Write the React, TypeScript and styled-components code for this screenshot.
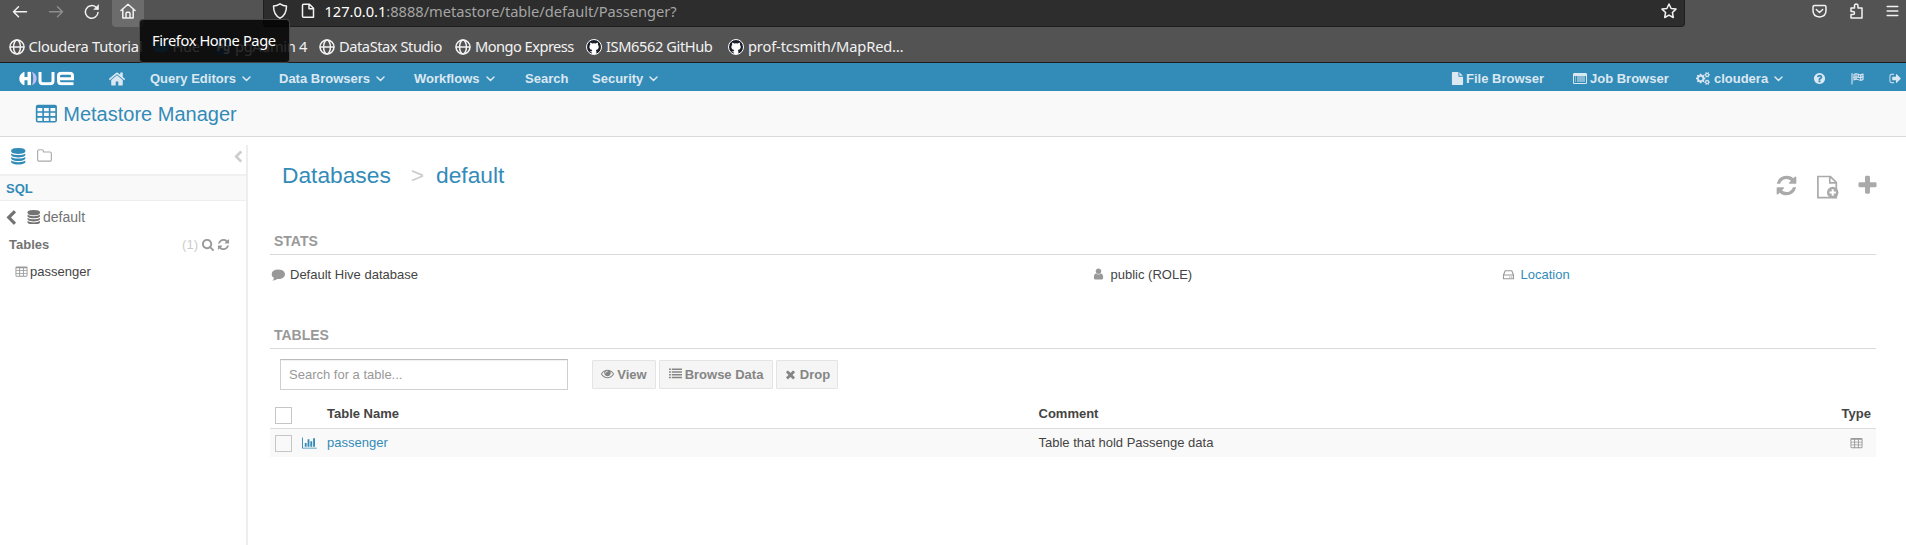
import React from "react";
import styled, { createGlobalStyle } from "styled-components";

const BLUE = "#338bb8";

const GlobalStyle = createGlobalStyle`
  * { box-sizing: border-box; }
  body {
    margin: 0;
    overflow: hidden;
    background: #fff;
    color: #444;
    font: 13px/20px "Liberation Sans", Arial, sans-serif;
  }
`;

/* ---------- icons ---------- */

const glyphs = {
  home: "M1472 992v480q0 26-19 45t-45 19h-384v-384h-256v384h-384q-26 0-45-19t-19-45v-480q0-1 .5-3t.5-3l575-474 575 474q1 2 1 6zm223-69l-62 74q-8 9-21 11h-3q-13 0-21-7l-692-577-692 577q-12 8-24 7-13-2-21-11l-62-74q-8-10-7-23.5t11-21.5l719-599q32-26 76-26t76 26l244 204v-195q0-14 9-23t23-9h192q14 0 23 9t9 23v408l219 182q10 8 11 21.5t-7 23.5z",
  refresh: "M1639 1056q0 5-1 7-64 268-268 434.5t-478 166.5q-146 0-282.5-55t-243.5-157l-129 129q-19 19-45 19t-45-19-19-45v-448q0-26 19-45t45-19h448q26 0 45 19t19 45-19 45l-137 137q71 66 161 102t187 36q134 0 250-65t186-179q11-17 53-117 8-23 30-23h192q13 0 22.5 9.5t9.5 22.5zm25-800v448q0 26-19 45t-45 19h-448q-26 0-45-19t-19-45 19-45l138-138q-148-137-349-137-134 0-250 65t-186 179q-11 17-53 117-8 23-30 23h-199q-13 0-22.5-9.5t-9.5-22.5v-7q65-268 270-434.5t480-166.5q146 0 284 55.5t245 156.5l130-129q19-19 45-19t45 19 19 45z",
  search: "M1216 832q0-185-131.5-316.5t-316.5-131.5-316.5 131.5-131.5 316.5 131.5 316.5 316.5 131.5 316.5-131.5 131.5-316.5zm512 832q0 52-38 90t-90 38q-54 0-90-38l-343-342q-179 124-399 124-143 0-273.5-55.5t-225-150-150-225-55.5-273.5 55.5-273.5 150-225 225-150 273.5-55.5 273.5 55.5 225 150 150 225 55.5 273.5q0 220-124 399l343 343q37 37 37 90z",
  question: "M1024 1376v-192q0-14-9-23t-23-9h-192q-14 0-23 9t-9 23v192q0 14 9 23t23 9h192q14 0 23-9t9-23zm256-672q0-88-55.5-163t-138.5-116-170-41q-243 0-371 213-15 24 8 42l132 100q7 6 19 6 16 0 25-12 53-68 86-92 34-24 86-24 48 0 85.5 26t37.5 59q0 38-20 61t-68 45q-63 28-115.5 86.5t-52.5 125.5v36q0 14 9 23t23 9h192q14 0 23-9t9-23q0-19 21.5-49.5t54.5-49.5q32-18 49-28.5t46-35 44.5-48 28-60.5 12.5-81zm384 192q0 209-103 385.5t-279.5 279.5-385.5 103-385.5-103-279.5-279.5-103-385.5 103-385.5 279.5-279.5 385.5-103 385.5 103 279.5 279.5 103 385.5z",
  signOut: "M704 1440q0 4 1 20t.5 26.5-3 23.5-10 19.5-20.5 6.5h-320q-119 0-203.5-84.5t-84.5-203.5v-704q0-119 84.5-203.5t203.5-84.5h320q13 0 22.5 9.5t9.5 22.5q0 4 1 20t.5 26.5-3 23.5-10 19.5-20.5 6.5h-320q-66 0-113 47t-47 113v704q0 66 47 113t113 47h312l11.5 1 11.5 3 8 5.5 7 9 2 13.5zm928-544q0 26-19 45l-544 544q-19 19-45 19t-45-19-19-45v-288h-448q-26 0-45-19t-19-45v-384q0-26 19-45t45-19h448v-288q0-26 19-45t45-19 45 19l544 544q19 19 19 45z",
  comment: "M1792 896q0 174-120 321.5t-326 233-450 85.5q-70 0-145-8-198 175-460 242-49 14-114 22-17 2-30.5-9t-17.5-29v-1q-3-4-.5-12t2-10 4.5-9.5l6-9 7-8.5 8-9q7-8 31-34.5t34.5-38 31-39.5 32.5-51 27-59 26-76q-157-89-247.5-220t-90.5-281q0-130 71-248.5t191-204.5 286-136.5 348-50.5q244 0 450 85.5t326 233 120 321.5z",
  user: "M1536 1399q0 109-62.5 187t-150.5 78h-854q-88 0-150.5-78t-62.5-187q0-85 8.5-160.5t31.5-152 58.5-131 94-89 134.5-34.5q131 128 313 128t313-128q76 0 134.5 34.5t94 89 58.5 131 31.5 152 8.5 160.5zm-256-887q0 159-112.5 271.5t-271.5 112.5-271.5-112.5-112.5-271.5 112.5-271.5 271.5-112.5 271.5 112.5 112.5 271.5z",
  eye: "M1664 960q-152-236-381-353 61 104 61 225 0 185-131.5 316.5t-316.5 131.5-316.5-131.5-131.5-316.5q0-121 61-225-229 117-381 353 133 205 333.5 326.5t434.5 121.5 434.5-121.5 333.5-326.5zm-720-384q0-20-14-34t-34-14q-125 0-214.5 89.5t-89.5 214.5q0 20 14 34t34 14 34-14 14-34q0-86 61-147t147-61q20 0 34-14t14-34zm848 384q0 34-20 69-140 230-376.5 368.5t-499.5 138.5-499.5-139-376.5-368q-20-35-20-69t20-69q140-229 376.5-368t499.5-139 499.5 139 376.5 368q20 35 20 69z",
  times: "M1490 1322q0 40-28 68l-136 136q-28 28-68 28t-68-28l-294-294-294 294q-28 28-68 28t-68-28l-136-136q-28-28-28-68t28-68l294-294-294-294q-28-28-28-68t28-68l136-136q28-28 68-28t68 28l294 294 294-294q28-28 68-28t68 28l136 136q28 28 28 68t-28 68l-294 294 294 294q28 28 28 68z",
  plus: "M1600 736v192q0 40-28 68t-68 28h-416v416q0 40-28 68t-68 28h-192q-40 0-68-28t-28-68v-416h-416q-40 0-68-28t-28-68v-192q0-40 28-68t68-28h416v-416q0-40 28-68t68-28h192q40 0 68 28t28 68v416h416q40 0 68 28t28 68z",
  folder: "M1600 1312v-704q0-40-28-68t-68-28h-704q-40 0-68-28t-28-68v-64q0-40-28-68t-68-28h-320q-40 0-68 28t-28 68v960q0 40 28 68t68 28h1216q40 0 68-28t28-68zm128-704v704q0 92-66 158t-158 66h-1216q-92 0-158-66t-66-158v-960q0-92 66-158t158-66h320q92 0 158 66t66 158v32h672q92 0 158 66t66 158z",
  database: "M896 768q237 0 443-43t325-127v170q0 69-103 128t-280 93.5-385 34.5-385-34.5-280-93.5-103-128v-170q119 84 325 127t443 43zm0 768q237 0 443-43t325-127v170q0 69-103 128t-280 93.5-385 34.5-385-34.5-280-93.5-103-128v-170q119 84 325 127t443 43zm0-384q237 0 443-43t325-127v170q0 69-103 128t-280 93.5-385 34.5-385-34.5-280-93.5-103-128v-170q119 84 325 127t443 43zm0-1152q208 0 385 34.5t280 93.5 103 128v128q0 69-103 128t-280 93.5-385 34.5-385-34.5-280-93.5-103-128v-128q0-69 103-128t280-93.5 385-34.5z",
  chevron: "M1427 301l-531 531 531 531q19 19 19 45t-19 45l-166 166q-19 19-45 19t-45-19l-742-742q-19-19-19-45t19-45l742-742q19-19 45-19t45 19l166 166q19 19 19 45t-19 45z",
  file: "M1152 512v-472q22 14 36 28l408 408q14 14 28 36h-472zm-128 32q0 40 28 68t68 28h544v1056q0 40-28 68t-68 28h-1344q-40 0-68-28t-28-68v-1600q0-40 28-68t68-28h800v544z",
  chart: "M640 896v512h-256v-512h256zm384-512v1024h-256v-1024h256zm1024 1152v128h-2048v-1536h128v1408h1920zm-640-896v768h-256v-768h256zm384-384v1152h-256v-1152h256z",
  cogs: "M896 896q0-106-75-181t-181-75-181 75-75 181 75 181 181 75 181-75 75-181zm768 512q0-52-38-90t-90-38-90 38-38 90q0 53 37.5 90.5t90.5 37.5 90.5-37.5 37.5-90.5zm0-1024q0-52-38-90t-90-38-90 38-38 90q0 53 37.5 90.5t90.5 37.5 90.5-37.5 37.5-90.5zm-384 421v185q0 10-7 19.5t-16 10.5l-155 24q-11 35-32 76 34 48 90 115 7 11 7 20 0 12-7 19-23 30-82.5 89.5t-78.5 59.5q-11 0-21-7l-115-90q-37 19-77 31-11 108-23 155-7 24-30 24h-186q-11 0-20-7.5t-10-17.5l-23-153q-34-10-75-31l-118 89q-7 7-20 7-11 0-21-8-144-133-144-160 0-9 7-19 10-14 41-53t47-61q-23-44-35-82l-152-24q-10-1-17-9.5t-7-19.5v-185q0-10 7-19.5t16-10.5l155-24q11-35 32-76-34-48-90-115-7-11-7-20 0-12 7-20 22-30 82-89t79-59q11 0 21 7l115 90q34-18 77-32 11-108 23-154 7-24 30-24h186q11 0 20 7.5t10 17.5l23 153q34 10 75 31l118-89q8-7 20-7 11 0 21 8 144 133 144 160 0 8-7 19-12 16-42 54t-45 60q23 48 34 82l152 23q10 2 17 10.5t7 19.5zm640 533v140q0 16-149 31-12 27-30 52 51 113 51 138 0 4-4 7-122 71-124 71-8 0-46-47t-52-68q-20 2-30 2t-30-2q-14 21-52 68t-46 47q-2 0-124-71-4-3-4-7 0-25 51-138-18-25-30-52-149-15-149-31v-140q0-16 149-31 13-29 30-52-51-113-51-138 0-4 4-7 4-2 35-20t59-34 30-16q8 0 46 46.5t52 67.5q20-2 30-2t30 2q51-71 92-112l6-2q4 0 124 70 4 3 4 7 0 25-51 138 17 23 30 52 149 15 149 31zm0-1024v140q0 16-149 31-12 27-30 52 51 113 51 138 0 4-4 7-122 71-124 71-8 0-46-47t-52-68q-20 2-30 2t-30-2q-14 21-52 68t-46 47q-2 0-124-71-4-3-4-7 0-25 51-138-18-25-30-52-149-15-149-31v-140q0-16 149-31 13-29 30-52-51-113-51-138 0-4 4-7 4-2 35-20t59-34 30-16q8 0 46 46.5t52 67.5q20-2 30-2t30 2q51-71 92-112l6-2q4 0 124 70 4 3 4 7 0 25-51 138 17 23 30 52 149 15 149 31z",
  table: "M224 128h1344q160 0 160 160v1088q0 160-160 160h-1344q-160 0-160-160v-1088q0-160 160-160zM192 384v256h384v-256zM704 384v256h384v-256zM1216 384v256h384v-256zM192 768v256h384v-256zM704 768v256h384v-256zM1216 768v256h384v-256zM192 1152v256h384v-256zM704 1152v256h384v-256zM1216 1152v256h384v-256z",
  list: "M0 192h256v220h-256zM384 192h1408v220h-1408zM0 576h256v220h-256zM384 576h1408v220h-1408zM0 960h256v220h-256zM384 960h1408v220h-1408zM0 1344h256v220h-256zM384 1344h1408v220h-1408z",
  listAlt: "M160 128h1472q160 0 160 160v1088q0 160-160 160h-1472q-160 0-160-160v-1088q0-160 160-160zM128 512v896h1536v-896zM256 576h128v128h-128zM512 576h1024v128h-1024zM256 832h128v128h-128zM512 832h1024v128h-1024zM256 1088h128v128h-128zM512 1088h1024v128h-1024z",
};

const Svg = styled.svg<{ $dx?: number; $dy?: number; $c?: string }>`
  display: block;
  flex: none;
  fill: currentColor;
  color: ${(p) => p.$c ?? "inherit"};
  transform: translate(${(p) => p.$dx ?? 0}px, ${(p) => p.$dy ?? 0}px);
`;

type GlyphProps = {
  name: keyof typeof glyphs;
  size: number;
  box?: number;
  color?: string;
  dx?: number;
  dy?: number;
};

const Glyph = ({ name, size, box = 1792, color, dx, dy }: GlyphProps) => (
  <Svg width={(size * box) / 1792} height={size} viewBox={`0 0 ${box} 1792`} $c={color} $dx={dx} $dy={dy}>
    <path fillRule="evenodd" d={glyphs[name]} />
  </Svg>
);

const Line = styled.svg<{ $w?: number }>`
  display: block;
  flex: none;
  fill: none;
  stroke: currentColor;
  stroke-width: ${(p) => p.$w ?? 1.5};
  stroke-linecap: round;
  stroke-linejoin: round;
`;

const CaretLine = styled(Line)`
  margin-left: 6px;
`;

const Caret = () => (
  <CaretLine width="9" height="6" viewBox="0 0 9 6"><path d="M1 1l3.5 3.5L8 1" /></CaretLine>
);

const Globe = () => (
  <Line width="16" height="16" viewBox="0 0 16 16">
    <circle cx="8" cy="8" r="7" />
    <ellipse cx="8" cy="8" rx="3.4" ry="7" />
    <path d="M1.2 8h13.6" />
  </Line>
);

const Flag = () => (
  <Line width="13" height="13" viewBox="0 0 13 13" $w={1.1}>
    <path d="M1 1.5V12M3 2.5Q5 1 7.2 2.3T12 2V7.5Q9.500 9 7.2 7.6T3 8z" />
    <path d="M5 2.5v5M9.7 3v4.8M3 5.2q2-1 4.2 0t4.8-.4M7.3 2.5v2.5" />
  </Line>
);

const DriveLine = styled(Line)`
  color: #999;
`;

const Drive = () => (
  <DriveLine width="13" height="12" viewBox="0 0 13 12" $w={1.1}>
    <path d="M1.5 6L3.2 1.800H9.800L11.500 6V9.800H1.500zM1.500 6H11.500M7.600 8h.4M9.500 8h.4" />
  </DriveLine>
);

const NewFile = () => (
  <Svg width="22" height="24" viewBox="0 0 22 24" $dx={1} $dy={1.5}>
    <path fill="none" stroke="currentColor" strokeWidth="1.7" d="M.9.9H13.200L19.300 6.900V22.200H.9zM12.800.9V7.300H19.300" />
    <circle cx="15.700" cy="17" r="5.700" />
    <path fill="none" stroke="#fff" strokeWidth="2" d="M15.700 13.800v6.400M12.500 17h6.400" />
  </Svg>
);

const Logo = () => (
  <Svg width="56" height="14" viewBox="0 0 56 14" $dy={-0.5}>
    <path fill="#fff" d="M5 .3Q.3 3 .3 7T4.5 13.7L5.5 13.2V8.800H8.500V13.700H12V.3H8.500V5.400H5.500V.7z" />
    <path fill="#c3bdf0" d="M13 .3Q17.600 2.500 17.600 7T13 13.700Q14.300 10.500 14.300 7T13 .3z" />
    <g fill="none" stroke="#fff" strokeWidth="3">
      <path d="M21 .5V9.500Q21 12.200 24 12.200H31Q34 12.200 34 9.500V.5" />
      <path d="M39.500 7.200H53.500V4.500Q53.500 1.800 50.500 1.800H42.500Q39.500 1.800 39.500 4.500V9.500Q39.500 12.200 42.500 12.200H54.500" />
    </g>
  </Svg>
);

/* ---------- browser chrome ---------- */

const Chrome = styled.header`
  position: relative;
  height: 63px;
  background: #535353;
  border-bottom: 1px solid #1e1e1e;
  color: #f2f2f2;
  font: 14.67px/20px "Noto Sans", sans-serif;
`;

const NavRow = styled.div`
  display: flex;
  height: 27px;
`;

const NavButton = styled.div<{ $w: number; $hot?: boolean; $dim?: boolean; $pad: number }>`
  width: ${(p) => p.$w}px;
  padding: 3px 0 0 ${(p) => p.$pad}px;
  border-radius: 0 0 4px 4px;
  background: ${(p) => (p.$hot ? "#6c6c6c" : "none")};
  color: ${(p) => (p.$dim ? "#8d8d8d" : "#f2f2f2")};
`;

const AddressBar = styled.div`
  display: flex;
  width: 1422px;
  margin-left: 119px;
  padding: 0 7px 0 7.5px;
  background: #2d2d2d;
  border: 1px solid #1e1e1e;
  border-top: 0;
  border-radius: 0 0 4px 4px;

  > svg { margin-top: 3px; }
  > svg + svg { margin-left: 12px; }
`;

const Url = styled.div`
  flex: 1;
  margin-left: 9px;
  padding-top: 1px;
  color: #a5a5a5;
  white-space: nowrap;
  letter-spacing: -0.03px;

  b { font-weight: 400; color: #fff; }
`;

const ToolIcons = styled.div`
  display: flex;
  gap: 22px;
  margin-left: 127px;
  padding-top: 3px;
`;

const Bookmarks = styled.nav`
  display: flex;
  padding: 10px 0 0 8.5px;
`;

const Bookmark = styled.div<{ $w: number; $ls: number }>`
  display: flex;
  align-items: center;
  gap: 4px;
  flex: none;
  width: ${(p) => p.$w}px;
  letter-spacing: ${(p) => p.$ls}px;
  line-height: 19px;
  white-space: nowrap;
`;

const HueMark = styled.span`
  width: 16px;
  height: 10px;
  border-radius: 6px;
  background: ${BLUE};
`;

const PgMark = styled.span`
  width: 16px;
  height: 16px;
  border-radius: 2px;
  background: #336791;
  color: #fff;
  font: bold 11px/15px "Noto Sans", sans-serif;
  text-align: center;
`;

const Octocat = () => (
  <Svg width="16" height="16" viewBox="0 0 16 16">
    <circle cx="8" cy="8" r="7.5" fill="#1b1f2b" stroke="#fff" strokeWidth="1" />
    <path fill="#fff" d="M4.3 3.5l2 1q1.7-.4 3.4 0l2-1q.6 1 .2 2.2 1 1.2.8 2.7-.2 2-2.9 2.5.6.6.6 1.500V15H5.700v-1.700q-1.600.2-2.200-1.100 1.200.4 2.300.1 0-.8.500-1.300-2.700-.5-2.900-2.600-.2-1.500.8-2.700-.4-1.200.1-2.200z" />
  </Svg>
);

const Tooltip = styled.div`
  position: absolute;
  left: 139px;
  top: 19px;
  width: 151px;
  height: 44px;
  padding: 10px 0 0 12px;
  background: rgba(0, 0, 0, 0.82);
  border: 1px solid rgba(110, 110, 110, 0.6);
  border-radius: 4px;
  color: #fff;
  letter-spacing: -0.4px;
  white-space: nowrap;
`;

/* ---------- application bars ---------- */

const AppNav = styled.nav`
  display: flex;
  height: 28px;
  padding-left: 19px;
  background: ${BLUE};
  color: #dbe8f1;
  font-weight: 700;
`;

const NavItem = styled.div<{ $w: number; $gap?: number }>`
  display: flex;
  align-items: center;
  gap: ${(p) => p.$gap ?? 0}px;
  flex: none;
  width: ${(p) => p.$w}px;
  height: 31px;
  white-space: nowrap;
`;

const Account = styled.span`
  display: flex;
  align-items: center;
`;

const Spacer = styled.div`
  flex: 1;
`;

const TitleBar = styled.div`
  display: flex;
  align-items: center;
  gap: 6px;
  height: 46px;
  padding-left: 34.5px;
  background: #f9f9f9;
  border-bottom: 1px solid #d9d9d9;
  color: ${BLUE};
  font-size: 20px;
`;

const Body = styled.div`
  display: flex;
  height: 408px;
`;

/* ---------- sidebar ---------- */

const Sidebar = styled.aside`
  width: 248px;
  margin-top: 8px;
  border-right: 2px solid #eee;
`;

const SourceTabs = styled.div`
  display: flex;
  align-items: flex-start;
  height: 31px;
  padding: 3px 2px 0 10px;
  border-bottom: 2px solid #f0f0f0;
`;

const SourceTitle = styled.div`
  height: 25px;
  padding: 3px 6px;
  background: #f9f9f9;
  border-bottom: 1px solid #eee;
  color: ${BLUE};
  font-weight: 700;
`;

const DbRow = styled.div`
  display: flex;
  align-items: center;
  gap: 7px;
  height: 32px;
  padding-left: 3px;
  color: #737373;
  font-size: 14px;
`;

const DbName = styled.span`
  display: flex;
  align-items: center;
  gap: 2.5px;
`;

const SideHeader = styled.div`
  display: flex;
  align-items: center;
  gap: 3px;
  height: 23px;
  padding: 0 16px 0 9px;
  color: #737373;

  b { flex: 1; }
  span { color: #ccc; }
`;

const SideTable = styled.div`
  display: flex;
  align-items: center;
  gap: 2px;
  height: 31px;
  padding-left: 15px;
`;

/* ---------- content ---------- */

const Content = styled.main`
  flex: 1;
  padding: 0 30px 0 22px;
`;

const Breadcrumb = styled.div`
  display: flex;
  height: 93px;
  padding: 25px 0 0 12px;
  color: ${BLUE};
  font-size: 22.75px;
  line-height: 26px;

  i { margin: 0 12px 0 20px; font-style: normal; color: #ccc; }
`;

const Actions = styled.div`
  display: flex;
  align-items: flex-start;
  gap: 18px;
  margin: 12px -2.5px 0 auto;
  color: #aaa;
`;

const SectionTitle = styled.h4<{ $top?: number }>`
  height: 25px;
  margin: ${(p) => p.$top ?? 0}px 0 0;
  padding-left: 4px;
  border-bottom: 1px solid #d9d9d9;
  color: #999;
  font-size: 14px;
  line-height: 22px;
`;

const Stats = styled.div`
  display: grid;
  grid-template-columns: 821px 410px 1fr;
  height: 39px;
`;

const Stat = styled.div`
  display: flex;
  align-items: center;
  gap: 5.5px;
  padding-left: 1px;
`;

const Link = styled.a`
  color: ${BLUE};
`;

const Toolbar = styled.div`
  display: flex;
  align-items: center;
  gap: 3px;
  height: 51px;
  padding-left: 10px;
`;

const SearchBox = styled.input`
  width: 288px;
  height: 31px;
  margin-right: 21px;
  padding: 0 8px;
  border: 1px solid #d0d0d0;
  border-top-color: #bbb;
  box-shadow: inset 0 1px 1px rgba(0, 0, 0, 0.06);
  font: 13px "Liberation Sans", Arial, sans-serif;

  &::placeholder { color: #999; opacity: 1; }
`;

const Button = styled.button<{ $w: number }>`
  display: flex;
  align-items: center;
  justify-content: center;
  gap: 3px;
  width: ${(p) => p.$w}px;
  height: 29px;
  padding: 0;
  background: #f5f5f5;
  border: 1px solid #e4e4e4;
  border-radius: 1px;
  color: #858585;
  font: bold 13px/20px "Liberation Sans", Arial, sans-serif;
  white-space: nowrap;
`;

const Check = styled.span`
  width: 17px;
  height: 17px;
  border: 1px solid #c6c6c6;
`;

const Row = styled.div<{ $head?: boolean }>`
  display: grid;
  grid-template-columns: 27px 25px 711.5px 1fr auto;
  align-items: center;
  height: ${(p) => (p.$head ? 29 : 28)}px;
  padding: 0 5px;
  background: ${(p) => (p.$head ? "#fff" : "#f9f9f9")};
  border-bottom: ${(p) => (p.$head ? "1px solid #ddd" : "0")};
  font-weight: ${(p) => (p.$head ? 700 : 400)};

  ${Check} { margin-top: ${(p) => (p.$head ? 3 : 1)}px; }
`;

export default function App() {
  return (
    <>
      <GlobalStyle />
      <Chrome>
        <NavRow>
          <NavButton $w={48} $pad={12}>
            <Line width="16" height="16" viewBox="0 0 16 16"><path d="M14.5 8.7H1.5M6.5 3.7L1.5 8.7l5 5" /></Line>
          </NavButton>
          <NavButton $w={36} $pad={0} $dim>
            <Line width="16" height="16" viewBox="0 0 16 16"><path d="M1.5 8.7H14.5M9.5 3.7l5 5-5 5" /></Line>
          </NavButton>
          <NavButton $w={28} $pad={0}>
            <Line width="16" height="16" viewBox="0 0 16 16">
              <path d="M14 9.5A6.300 6.300 0 1 1 12 4.300l1.500 1.500" />
              <path d="M14.5 2v4.500H10z" fill="currentColor" strokeWidth=".6" />
            </Line>
          </NavButton>
          <NavButton $w={32} $pad={7.5} $hot>
            <Line width="16" height="16" viewBox="0 0 16 16"><path d="M1 7.5L8 1.200l7 6.300M2.800 6.500V15h10.400V6.500M6 15v-4.500q0-1.200 1.200-1.200h1.600q1.200 0 1.200 1.200V15" /></Line>
          </NavButton>
          <AddressBar>
            <Line width="16" height="16" viewBox="0 0 16 16"><path d="M8 .8q3.200 2.200 6.500 2.200 0 9-6.500 12.200Q1.500 12 1.500 3 4.800 3 8 .8z" /></Line>
            <Line width="16" height="16" viewBox="0 0 16 16"><path d="M3.500 1.300H9.500l4 4V14.200H3.500q-1 0-1-1V2.300q0-1 1-1zM9 1.500v4.300h4.300" /></Line>
            <Url><b>127.0.0.1</b>:8888/metastore/table/default/Passenger?</Url>
            <Line width="16" height="16" viewBox="0 0 16 16"><path d="M8 1l2.100 4.500 4.900.6-3.600 3.400.9 5L8 12.100l-4.300 2.400.9-5L1 6.100l4.900-.6z" /></Line>
          </AddressBar>
          <ToolIcons>
            <Line width="15" height="16" viewBox="0 0 15 16"><path d="M2.500 2.500h10q1.500 0 1.500 1.500v3.500q0 6-6.500 6.500Q1 13.500 1 7.500V4q0-1.500 1.500-1.500zM4.300 6.500l3.200 3 3.200-3" /></Line>
            <Line width="15" height="16" viewBox="0 0 15 16"><path d="M2 5h3.500V3q0-2 1.700-2T9 3v2h4v10H2v-3.500h2q1.500 0 1.500-1.500T4 8.500H2z" /></Line>
            <Line width="14" height="16" viewBox="0 0 14 16"><path d="M1.200 3.500h10.600M1.200 8h10.600M1.200 12.500h10.600" /></Line>
          </ToolIcons>
        </NavRow>
        <Bookmarks>
          <Bookmark $w={144} $ls={-0.28}><Globe />Cloudera Tutorial</Bookmark>
          <Bookmark $w={62.5} $ls={-0.3}><HueMark />Hue</Bookmark>
          <Bookmark $w={104} $ls={-0.35}><PgMark>Pg</PgMark>pgAdmin 4</Bookmark>
          <Bookmark $w={136} $ls={-0.45}><Globe />DataStax Studio</Bookmark>
          <Bookmark $w={131} $ls={-0.55}><Globe />Mongo Express</Bookmark>
          <Bookmark $w={142} $ls={-0.42}><Octocat />ISM6562 GitHub</Bookmark>
          <Bookmark $w={190} $ls={-0.15}><Octocat />prof-tcsmith/MapRed…</Bookmark>
        </Bookmarks>
        <Tooltip>Firefox Home Page</Tooltip>
      </Chrome>

      <AppNav>
        <NavItem $w={89}><Logo /></NavItem>
        <NavItem $w={42}><Glyph name="home" size={18} /></NavItem>
        <NavItem $w={129}>Query Editors<Caret /></NavItem>
        <NavItem $w={135}>Data Browsers<Caret /></NavItem>
        <NavItem $w={111}>Workflows<Caret /></NavItem>
        <NavItem $w={67}>Search</NavItem>
        <NavItem $w={80}>Security<Caret /></NavItem>
        <Spacer />
        <NavItem $w={122.5} $gap={2.5}><Glyph name="file" size={13} />File Browser</NavItem>
        <NavItem $w={123} $gap={3}><Glyph name="listAlt" size={14} />Job Browser</NavItem>
        <NavItem $w={117} $gap={4}><Glyph name="cogs" size={13} box={1920} /><Account>cloudera<Caret /></Account></NavItem>
        <NavItem $w={38}><Glyph name="question" size={13} /></NavItem>
        <NavItem $w={38}><Flag /></NavItem>
        <NavItem $w={17}><Glyph name="signOut" size={13} /></NavItem>
      </AppNav>

      <TitleBar><Glyph name="table" size={22.75} dy={1} />Metastore Manager</TitleBar>

      <Body>
        <Sidebar>
          <SourceTabs>
            <Glyph name="database" size={16.5} color={BLUE} />
            <Glyph name="folder" size={16} color="#aaa" dx={9.5} />
            <Spacer />
            <Glyph name="chevron" size={13} color="#ccc" dx={0.5} dy={2.5} />
          </SourceTabs>
          <SourceTitle>SQL</SourceTitle>
          <DbRow>
            <Glyph name="chevron" size={16} dy={1} />
            <DbName><Glyph name="database" size={14.5} dx={0.5} />default</DbName>
          </DbRow>
          <SideHeader>
            <b>Tables</b>
            <span>(1)</span>
            <Glyph name="search" size={13} color="#999" dx={0.5} />
            <Glyph name="refresh" size={13} color="#999" />
          </SideHeader>
          <SideTable><Glyph name="table" size={13} color="#999" dy={0.5} />passenger</SideTable>
        </Sidebar>

        <Content>
          <Breadcrumb>
            Databases<i>&gt;</i>default
            <Actions>
              <Glyph name="refresh" size={23} />
              <NewFile />
              <Glyph name="plus" size={23} />
            </Actions>
          </Breadcrumb>
          <SectionTitle>STATS</SectionTitle>
          <Stats>
            <Stat><Glyph name="comment" size={13.5} color="#999" dx={0.5} dy={-0.5} />Default Hive database</Stat>
            <Stat><Glyph name="user" size={13} color="#999" dy={-0.5} />public (ROLE)</Stat>
            <Stat><Drive /><Link>Location</Link></Stat>
          </Stats>
          <SectionTitle $top={30}>TABLES</SectionTitle>
          <Toolbar>
            <SearchBox placeholder="Search for a table..." />
            <Button $w={64}><Glyph name="eye" size={13} dy={-1} />View</Button>
            <Button $w={114}><Glyph name="list" size={13} dy={-1} />Browse Data</Button>
            <Button $w={62}><Glyph name="times" size={13} />Drop</Button>
          </Toolbar>
          <Row $head><Check /><span /><span>Table Name</span><span>Comment</span><span>Type</span></Row>
          <Row>
            <Check />
            <Glyph name="chart" size={13} box={2048} color={BLUE} dy={-0.5} />
            <Link>passenger</Link>
            <span>Table that hold Passenge data</span>
            <Glyph name="table" size={13} color="#999" dx={-8} />
          </Row>
        </Content>
      </Body>
    </>
  );
}
